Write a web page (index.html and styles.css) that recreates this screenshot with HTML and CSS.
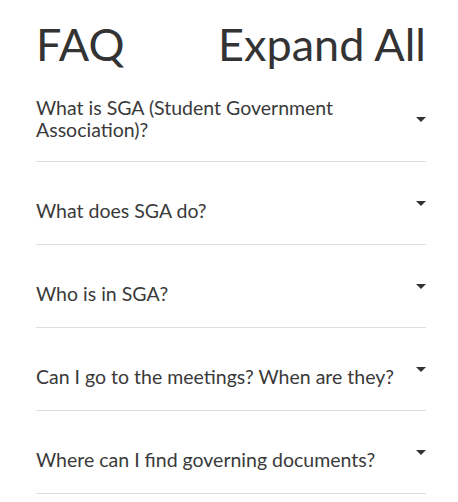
FILE: index.html
```html
<!DOCTYPE html>
<html lang="en">
<head>
<meta charset="utf-8">
<title>FAQ</title>
<link rel="stylesheet" href="styles.css">
</head>
<body>
<div class="faq">
  <div class="faq-header">
    <h1 class="faq-title">FAQ</h1>
    <span class="faq-expand">Expand All</span>
  </div>
  <div class="faq-list">
    <div class="faq-item faq-item--first">
      <span class="faq-question">What is SGA (Student Government Association)?</span>
      <span class="faq-caret"></span>
    </div>
    <div class="faq-item">
      <span class="faq-question">What does SGA do?</span>
      <span class="faq-caret"></span>
    </div>
    <div class="faq-item">
      <span class="faq-question">Who is in SGA?</span>
      <span class="faq-caret"></span>
    </div>
    <div class="faq-item">
      <span class="faq-question">Can I go to the meetings? When are they?</span>
      <span class="faq-caret"></span>
    </div>
    <div class="faq-item">
      <span class="faq-question">Where can I find governing documents?</span>
      <span class="faq-caret"></span>
    </div>
  </div>
</div>
</body>
</html>
```
FILE: styles.css
```css
html, body {
  margin: 0;
  padding: 0;
  background: #ffffff;
}

body {
  font-family: Lato, "Open Sans", Arial, sans-serif;
  color: #333333;
}

.faq {
  margin: 0 32px 0 36px;
}

.faq-header {
  display: flex;
  justify-content: space-between;
  align-items: baseline;
  padding-top: 17px;
}

.faq-title,
.faq-expand {
  margin: 0;
  font-size: 45px;
  font-weight: 400;
  line-height: 54px;
  color: #333333;
}

.faq-list {
  display: flex;
  flex-direction: column;
}

.faq-item {
  display: flex;
  justify-content: space-between;
  align-items: flex-start;
  gap: 20px;
  padding: 38px 0 22px;
  border-bottom: 1px solid #dddddd;
}

.faq-item--first {
  align-items: center;
  padding: 26px 0 20px;
}

.faq-question {
  font-size: 19.5px;
  line-height: 22px;
  color: #3a3a3a;
}

.faq-caret {
  flex: none;
  width: 0;
  height: 0;
  margin-top: 1px;
  border-left: 5px solid transparent;
  border-right: 5px solid transparent;
  border-top: 5px solid #333333;
}

.faq-item--first .faq-caret {
  margin-top: 0;
}
```
